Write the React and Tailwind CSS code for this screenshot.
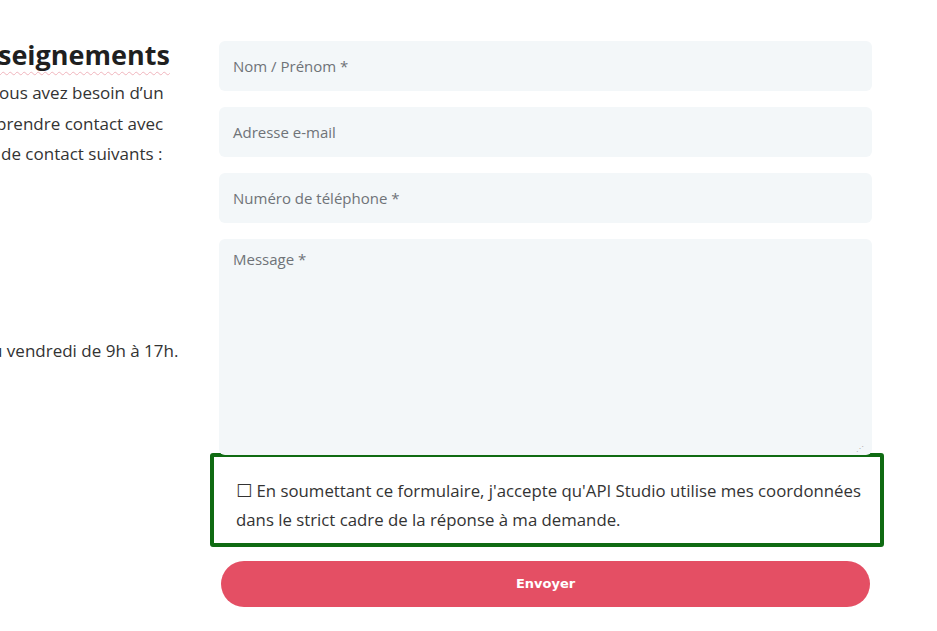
import React from 'react';

const font = { fontFamily: '"Open Sans", "Liberation Sans", sans-serif' };

const Field = ({ label }) => (
  <div className="h-[50px] rounded-md bg-[#f3f7f9] px-[14px] flex items-center text-[15px] text-[#6f7378]">
    {label}
  </div>
);

const App = () => {
  return (
    <div className="relative w-full h-[631px] overflow-hidden bg-white text-[#2b2b2b]" style={font}>
      <div className="flex">
        <div className="w-[219px] shrink-0 pt-[38px]">
          <h2 className="text-[27px] font-bold leading-[34px] text-[#1f1f1f] -ml-[2px] underline decoration-wavy decoration-[#f0b4bc] decoration-1 underline-offset-[6px]">
            seignements
          </h2>
          <div className="mt-[6px] text-[17px] leading-[30.5px] text-[#333]">
            <div className="-ml-[1px]">ous avez besoin d’un</div>
            <div className="-ml-[4px]">prendre contact avec</div>
            <div className="ml-[1px]">de contact suivants :</div>
          </div>
          <div className="mt-[166px] text-[17px] leading-[30px] text-[#333] -ml-[8px]">u vendredi de 9h à 17h.</div>
        </div>

        <div className="w-[653px] shrink-0 pt-[41px] flex flex-col">
          <div className="flex flex-col gap-4">
            <Field label="Nom / Prénom *" />
            <Field label="Adresse e-mail" />
            <Field label="Numéro de téléphone *" />
            <div className="relative h-[216px] rounded-md bg-[#f3f7f9] px-[14px] pt-[9px] text-[15px] text-[#6f7378]">
              Message *
              <span className="absolute right-[8px] bottom-[3px] text-[8px] leading-none text-[#b0b0b0]">⋰</span>
            </div>
          </div>

          <div className="-mt-[2px] -ml-[9px] -mr-[12px] h-[94px] border-4 border-[#0f6b12] rounded-[3px] bg-white pl-[22px] pr-[4px] pt-[19px] text-[16.8px] leading-[29px] text-[#333] whitespace-nowrap">
            <span style={{ fontFamily: '"DejaVu Sans", sans-serif' }} className="text-[18px] leading-none">☐</span> En soumettant ce formulaire, j'accepte qu'API Studio utilise mes coordonnées
            <br />
            dans le strict cadre de la réponse à ma demande.
          </div>

          <button
            className="mt-[14px] mx-[2px] h-[46px] rounded-full bg-[#e44f64] text-white text-[13px] font-bold"
            style={{ fontFamily: '"DejaVu Sans", sans-serif' }}
          >
            Envoyer
          </button>
        </div>
      </div>
    </div>
  );
};

export default App;
